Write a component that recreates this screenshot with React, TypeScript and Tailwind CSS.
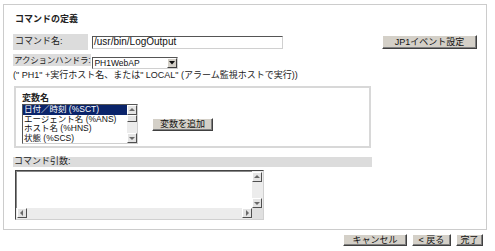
import type { ReactNode } from 'react';

const btnBase =
  'flex items-center justify-center bg-[#d4d0c8] border border-t-white border-l-white border-r-[#404040] border-b-[#404040] shadow-[inset_-1px_-1px_0_#808080] text-[9px] leading-none text-[#111] whitespace-nowrap';

function Btn({ children, className }: { children: ReactNode; className: string }) {
  return <div className={`${btnBase} ${className}`}>{children}</div>;
}

function Arrow({ dir }: { dir: 'up' | 'down' | 'left' | 'right' }) {
  const pts = {
    up: '1,5 4,2 7,5',
    down: '1,3 4,6 7,3',
    left: '5,1 2,4 5,7',
    right: '3,1 6,4 3,7',
  }[dir];
  return (
    <div className="w-[10px] h-[10px] flex items-center justify-center bg-[#e4e4e4] border border-t-white border-l-white border-r-[#505050] border-b-[#505050]">
      <svg width="8" height="8" viewBox="0 0 8 8">
        <polygon points={pts} fill="#6a6a6a" />
      </svg>
    </div>
  );
}

const items = ['日付／時刻 (%SCT)', 'エージェント名 (%ANS)', 'ホスト名 (%HNS)', '状態 (%SCS)'];

export default function App() {
  return (
    <div className="w-[495px] h-[251px] bg-white text-[#222] font-['Liberation_Sans','Noto_Sans_CJK_JP',sans-serif] overflow-hidden">
      <div className="ml-[3px] mt-[4px] w-[484px] h-[226px] border border-[#cccccc] pl-[9px] pr-[9px] flex flex-col">
        <div className="mt-[9px] ml-[2px] h-[10px] leading-[10px] text-[9px] font-bold">コマンドの定義</div>

        {/* command name */}
        <div className="mt-[10px] h-[16px] flex items-center">
          <div className="w-[75px] h-[16px] bg-[#dcdcdc] pl-[2px] flex items-center text-[9px] whitespace-nowrap">
            コマンド名:
          </div>
          <div className="ml-[4px] w-[191px] h-[13px] border border-t-[#555] border-l-[#555] border-r-[#d0d0d0] border-b-[#d0d0d0] flex items-center pl-[1px] text-[10px] leading-none text-[#111]">
            /usr/bin/LogOutput
          </div>
          <Btn className="ml-auto w-[95px] h-[14px]">JP1イベント設定</Btn>
        </div>

        {/* action handler */}
        <div className="mt-[4px] h-[15px] flex items-start">
          <div className="h-[12px] bg-[#dcdcdc] pl-[1px] pr-[1px] flex items-center text-[8.5px] tracking-[-0.2px] whitespace-nowrap shrink-0">
            アクションハンドラ:
          </div>
          <div className="ml-[1px] mt-[3px] w-[86px] h-[12px] border border-t-[#555] border-l-[#555] border-r-[#d0d0d0] border-b-[#d0d0d0] flex items-center">
            <span className="flex-1 pl-[1px] text-[8.5px] leading-none text-[#111]">PH1WebAP</span>
            <div className="w-[10px] h-[10px] flex items-center justify-center bg-[#d4d0c8] border border-t-white border-l-white border-r-[#404040] border-b-[#404040]">
              <svg width="6" height="4" viewBox="0 0 6 4">
                <polygon points="0,0 6,0 3,3.5" fill="#111" />
              </svg>
            </div>
          </div>
        </div>

        <div className="mt-[1px] h-[10px] leading-[10px] text-[9px] whitespace-nowrap">
          (&quot; PH1&quot; +実行ホスト名、または&quot; LOCAL&quot; (アラーム監視ホストで実行))
        </div>

        {/* variable names */}
        <div className="mt-[6px] ml-[1px] w-[357px] h-[62px] border-2 border-[#d8d8d8] pl-[6px] pt-[5px] flex flex-col">
          <div className="h-[10px] leading-[10px] text-[9px] font-bold">変数名</div>
          <div className="mt-[1px] flex items-start">
            <div className="w-[116px] h-[40px] border border-t-[#555] border-l-[#555] border-r-[#d0d0d0] border-b-[#d0d0d0] flex overflow-hidden">
              <div className="flex-1 flex flex-col text-[8.5px] leading-[9.5px]">
                {items.map((t, i) => (
                  <div
                    key={t}
                    className={
                      i === 0
                        ? 'h-[9.5px] pl-[1px] bg-[#0a246a] text-white whitespace-nowrap'
                        : 'h-[9.5px] pl-[1px] text-[#111] whitespace-nowrap'
                    }
                  >
                    {t}
                  </div>
                ))}
              </div>
              <div className="w-[10px] bg-[#ececec] flex flex-col">
                <Arrow dir="up" />
                <div className="h-[7px] bg-[#e4e4e4] border border-t-white border-l-white border-r-[#505050] border-b-[#505050]" />
                <div className="flex-1" />
                <Arrow dir="down" />
              </div>
            </div>
            <Btn className="ml-[14px] mt-[14px] w-[61px] h-[13px]">変数を追加</Btn>
          </div>
        </div>

        {/* command args */}
        <div className="mt-[9px] w-[359px] h-[10px] bg-[#dcdcdc] pl-[1px] flex items-center text-[9px] whitespace-nowrap">
          コマンド引数:
        </div>
        <div className="mt-[3px] ml-[2px] w-[249px] h-[50px] border border-t-[#444] border-l-[#444] border-r-[#d0d0d0] border-b-[#d0d0d0] shadow-[inset_1px_1px_0_#888] flex flex-col">
          <div className="flex-1 flex">
            <div className="flex-1" />
            <div className="w-[11px] bg-[#ececec] flex flex-col pt-[1px]">
              <Arrow dir="up" />
              <div className="flex-1" />
              <Arrow dir="down" />
            </div>
          </div>
          <div className="h-[11px] flex">
            <div className="flex-1 bg-[#ececec] flex pl-[1px]">
              <Arrow dir="left" />
              <div className="flex-1" />
              <Arrow dir="right" />
            </div>
            <div className="w-[11px] bg-[#e0e0e0]" />
          </div>
        </div>
      </div>

      {/* bottom buttons */}
      <div className="mt-[4px] pr-[12px] flex justify-end gap-[5px]">
        <Btn className="w-[64px] h-[12px]">キャンセル</Btn>
        <Btn className="w-[39px] h-[12px]">&lt; 戻る</Btn>
        <Btn className="w-[27px] h-[12px]">完了</Btn>
      </div>
    </div>
  );
}
